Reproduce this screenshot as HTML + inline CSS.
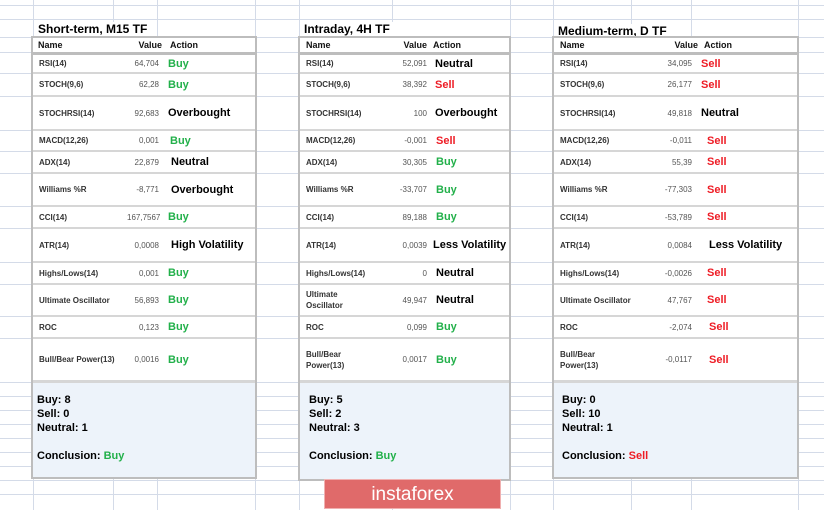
<!DOCTYPE html>
<html><head><meta charset="utf-8"><style>
body{margin:0;width:824px;height:510px;overflow:hidden;background:#fff;font-family:"Liberation Sans",Arial,sans-serif;position:relative}
.h{position:absolute;left:0;width:824px;height:1px;background:#d4dbe8}
.v{position:absolute;top:0;height:510px;width:1px;background:#d4dbe8}
.title{position:absolute;top:22px;font-size:12px;font-weight:bold;color:#000;background:#fff;padding:0 3px;}
.t{position:absolute;top:36px;border:2px solid #bdbdbd;background:#fff;box-sizing:border-box}
.hd{height:14px;border-bottom:3px solid #bdbdbd;display:flex;align-items:center;font-size:9px;font-weight:bold;color:#111}
.r{display:flex;align-items:center;border-bottom:2px solid #d6d6d6;box-sizing:border-box}
.n{font-size:8px;font-weight:bold;color:#333;padding-left:6px;box-sizing:border-box;line-height:11px}
.val{font-size:8px;color:#555;text-align:right;box-sizing:border-box}
.a{font-size:11px;font-weight:bold;padding-left:9px;box-sizing:border-box}
.b{color:#22b04a}.s{color:#ee1c25}.k{color:#000}
.sum{background:#edf3fa;height:94px;padding:10px 0 0 4px;box-sizing:border-box;font-size:11px;font-weight:bold;color:#000;line-height:14px}
.logo{position:absolute;left:324px;top:479px;width:177px;height:30px;background:#e06a6a;color:#fff;font-size:19px;text-align:center;line-height:29px;border:1px solid #f0b0b0;box-sizing:border-box}
</style></head><body>
<div class="h" style="top:5px"></div><div class="h" style="top:19px"></div><div class="h" style="top:37px"></div><div class="h" style="top:52px"></div><div class="h" style="top:73px"></div><div class="h" style="top:96px"></div><div class="h" style="top:130px"></div><div class="h" style="top:151px"></div><div class="h" style="top:173px"></div><div class="h" style="top:206px"></div><div class="h" style="top:228px"></div><div class="h" style="top:262px"></div><div class="h" style="top:284px"></div><div class="h" style="top:316px"></div><div class="h" style="top:338px"></div><div class="h" style="top:382px"></div><div class="h" style="top:396px"></div><div class="h" style="top:410px"></div><div class="h" style="top:424px"></div><div class="h" style="top:438px"></div><div class="h" style="top:452px"></div><div class="h" style="top:466px"></div><div class="h" style="top:480px"></div><div class="h" style="top:494px"></div>
<div class="v" style="left:33px"></div><div class="v" style="left:113px"></div><div class="v" style="left:157px"></div><div class="v" style="left:255px"></div><div class="v" style="left:299px"></div><div class="v" style="left:392px"></div><div class="v" style="left:510px"></div><div class="v" style="left:553px"></div><div class="v" style="left:631px"></div><div class="v" style="left:691px"></div><div class="v" style="left:798px"></div>

<div class="title" style="left:35px">Short-term, M15 TF</div>
<div class="title" style="left:301px">Intraday, 4H TF</div>
<div class="title" style="left:555px;top:24px">Medium-term, D TF</div>

<div class="t" style="left:31px;width:226px">
<div class="hd"><span style="width:92px;padding-left:5px">Name</span><span style="width:32px;text-align:right">Value</span><span style="padding-left:8px">Action</span></div>
<div class="r" style="height:19px"><span class="n" style="width:94px">RSI(14)</span><span class="val" style="width:32px">64,704</span><span class="a b">Buy</span></div>
<div class="r" style="height:23px"><span class="n" style="width:94px">STOCH(9,6)</span><span class="val" style="width:32px">62,28</span><span class="a b">Buy</span></div>
<div class="r" style="height:34px"><span class="n" style="width:94px">STOCHRSI(14)</span><span class="val" style="width:32px">92,683</span><span class="a k">Overbought</span></div>
<div class="r" style="height:21px"><span class="n" style="width:94px">MACD(12,26)</span><span class="val" style="width:32px">0,001</span><span class="a b" style="padding-left:11px">Buy</span></div>
<div class="r" style="height:22px"><span class="n" style="width:94px">ADX(14)</span><span class="val" style="width:32px">22,879</span><span class="a k" style="padding-left:12px">Neutral</span></div>
<div class="r" style="height:33px"><span class="n" style="width:94px">Williams %R</span><span class="val" style="width:32px">-8,771</span><span class="a k" style="padding-left:12px">Overbought</span></div>
<div class="r" style="height:22px"><span class="n" style="width:94px">CCI(14)</span><span class="val" style="width:32px">167,7567</span><span class="a b">Buy</span></div>
<div class="r" style="height:34px"><span class="n" style="width:94px">ATR(14)</span><span class="val" style="width:32px">0,0008</span><span class="a k" style="padding-left:12px">High Volatility</span></div>
<div class="r" style="height:22px"><span class="n" style="width:94px">Highs/Lows(14)</span><span class="val" style="width:32px">0,001</span><span class="a b">Buy</span></div>
<div class="r" style="height:32px"><span class="n" style="width:94px">Ultimate Oscillator</span><span class="val" style="width:32px">56,893</span><span class="a b">Buy</span></div>
<div class="r" style="height:22px"><span class="n" style="width:94px">ROC</span><span class="val" style="width:32px">0,123</span><span class="a b">Buy</span></div>
<div class="r" style="height:44px;border-bottom:3px solid #d6d6d6"><span class="n" style="width:94px">Bull/Bear Power(13)</span><span class="val" style="width:32px">0,0016</span><span class="a b">Buy</span></div>
<div class="sum">Buy: 8<br>Sell: 0<br>Neutral: 1<br><br>Conclusion: <span class="b">Buy</span></div>
</div>

<div class="t" style="left:298px;width:213px">
<div class="hd"><span style="width:92px;padding-left:6px">Name</span><span style="width:29px;text-align:right">Value</span><span style="padding-left:6px">Action</span></div>
<div class="r" style="height:19px"><span class="n" style="width:98px">RSI(14)</span><span class="val" style="width:29px">52,091</span><span class="a k" style="padding-left:8px">Neutral</span></div>
<div class="r" style="height:23px"><span class="n" style="width:98px">STOCH(9,6)</span><span class="val" style="width:29px">38,392</span><span class="a s" style="padding-left:8px">Sell</span></div>
<div class="r" style="height:34px"><span class="n" style="width:98px">STOCHRSI(14)</span><span class="val" style="width:29px">100</span><span class="a k" style="padding-left:8px">Overbought</span></div>
<div class="r" style="height:21px"><span class="n" style="width:98px">MACD(12,26)</span><span class="val" style="width:29px">-0,001</span><span class="a s">Sell</span></div>
<div class="r" style="height:22px"><span class="n" style="width:98px">ADX(14)</span><span class="val" style="width:29px">30,305</span><span class="a b">Buy</span></div>
<div class="r" style="height:33px"><span class="n" style="width:98px">Williams %R</span><span class="val" style="width:29px">-33,707</span><span class="a b">Buy</span></div>
<div class="r" style="height:22px"><span class="n" style="width:98px">CCI(14)</span><span class="val" style="width:29px">89,188</span><span class="a b">Buy</span></div>
<div class="r" style="height:34px"><span class="n" style="width:98px">ATR(14)</span><span class="val" style="width:29px">0,0039</span><span class="a k" style="padding-left:6px">Less Volatility</span></div>
<div class="r" style="height:22px"><span class="n" style="width:98px">Highs/Lows(14)</span><span class="val" style="width:29px">0</span><span class="a k">Neutral</span></div>
<div class="r" style="height:32px"><span class="n" style="width:98px">Ultimate<br>Oscillator</span><span class="val" style="width:29px">49,947</span><span class="a k">Neutral</span></div>
<div class="r" style="height:22px"><span class="n" style="width:98px">ROC</span><span class="val" style="width:29px">0,099</span><span class="a b">Buy</span></div>
<div class="r" style="height:44px;border-bottom:3px solid #d6d6d6"><span class="n" style="width:98px">Bull/Bear<br>Power(13)</span><span class="val" style="width:29px">0,0017</span><span class="a b">Buy</span></div>
<div class="sum" style="padding-left:9px;height:96px">Buy: 5<br>Sell: 2<br>Neutral: 3<br><br>Conclusion: <span class="b">Buy</span></div>
</div>

<div class="t" style="left:552px;width:247px">
<div class="hd"><span style="width:99px;padding-left:6px">Name</span><span style="width:39px;text-align:right">Value</span><span style="padding-left:6px">Action</span></div>
<div class="r" style="height:19px"><span class="n" style="width:99px">RSI(14)</span><span class="val" style="width:39px">34,095</span><span class="a s">Sell</span></div>
<div class="r" style="height:23px"><span class="n" style="width:99px">STOCH(9,6)</span><span class="val" style="width:39px">26,177</span><span class="a s">Sell</span></div>
<div class="r" style="height:34px"><span class="n" style="width:99px">STOCHRSI(14)</span><span class="val" style="width:39px">49,818</span><span class="a k" style="padding-left:9px">Neutral</span></div>
<div class="r" style="height:21px"><span class="n" style="width:99px">MACD(12,26)</span><span class="val" style="width:39px">-0,011</span><span class="a s" style="padding-left:15px">Sell</span></div>
<div class="r" style="height:22px"><span class="n" style="width:99px">ADX(14)</span><span class="val" style="width:39px">55,39</span><span class="a s" style="padding-left:15px">Sell</span></div>
<div class="r" style="height:33px"><span class="n" style="width:99px">Williams %R</span><span class="val" style="width:39px">-77,303</span><span class="a s" style="padding-left:15px">Sell</span></div>
<div class="r" style="height:22px"><span class="n" style="width:99px">CCI(14)</span><span class="val" style="width:39px">-53,789</span><span class="a s" style="padding-left:15px">Sell</span></div>
<div class="r" style="height:34px"><span class="n" style="width:99px">ATR(14)</span><span class="val" style="width:39px">0,0084</span><span class="a k" style="padding-left:17px">Less Volatility</span></div>
<div class="r" style="height:22px"><span class="n" style="width:99px">Highs/Lows(14)</span><span class="val" style="width:39px">-0,0026</span><span class="a s" style="padding-left:15px">Sell</span></div>
<div class="r" style="height:32px"><span class="n" style="width:99px">Ultimate Oscillator</span><span class="val" style="width:39px">47,767</span><span class="a s" style="padding-left:15px">Sell</span></div>
<div class="r" style="height:22px"><span class="n" style="width:99px">ROC</span><span class="val" style="width:39px">-2,074</span><span class="a s" style="padding-left:17px">Sell</span></div>
<div class="r" style="height:44px;border-bottom:3px solid #d6d6d6"><span class="n" style="width:99px">Bull/Bear<br>Power(13)</span><span class="val" style="width:39px">-0,0117</span><span class="a s" style="padding-left:17px">Sell</span></div>
<div class="sum" style="padding-left:8px">Buy: 0<br>Sell: 10<br>Neutral: 1<br><br>Conclusion: <span class="s">Sell</span></div>
</div>

<div class="logo">instaforex</div>
</body></html>
